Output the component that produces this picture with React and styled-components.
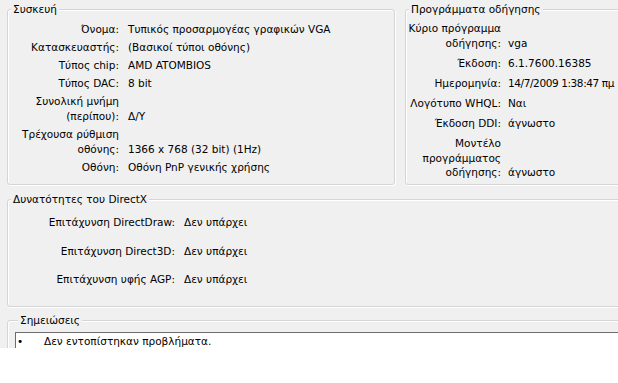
import React from "react";
import styled, { createGlobalStyle } from "styled-components";

const GlobalStyle = createGlobalStyle`
  html, body {
    margin: 0;
    padding: 0;
    background: #ffffff;
    overflow: hidden;
  }
  body {
    font-family: "DejaVu Sans", Tahoma, sans-serif;
    font-size: 10.5px;
    color: #000;
  }
`;

const Dialog = styled.div`
  width: 660px;
  height: 348px;
  overflow: hidden;
  background: #f0f0f0;
  padding: 2px 0 0 7px;
  box-sizing: border-box;
`;

const TopRow = styled.div`
  display: flex;
  gap: 10px;
  margin-bottom: 7px;
`;

const Group = styled.fieldset`
  margin: 0 0 ${p => p.$mb || 0}px 0;
  padding: ${p => p.$pad || "0"};
  height: ${p => p.$h}px;
  width: ${p => p.$w ? `${p.$w}px` : "auto"};
  flex: ${p => p.$w ? "none" : "1"};
  box-sizing: border-box;
  border: 1px solid #d5d5d5;
  border-radius: 3px;
  box-shadow: inset 1px 1px 0 #ffffff, 1px 1px 0 #ffffff;
  min-width: 0;
`;

const Legend = styled.legend`
  padding: 0 2px;
  margin-left: 3px;
  line-height: 14px;
  background: #f0f0f0;
`;

const Grid = styled.div`
  display: grid;
  grid-template-columns: ${p => p.$label}px 1fr;
  column-gap: ${p => p.$colGap}px;
  row-gap: ${p => p.$rowGap}px;
  align-items: end;
  line-height: ${p => p.$line || 15}px;
  white-space: nowrap;
`;

const Label = styled.div`
  text-align: right;
  line-height: ${p => p.$line ? `${p.$line}px` : "inherit"};
`;

const Value = styled.div`
  letter-spacing: ${p => p.$tight ? "-0.4px" : "normal"};
`;

const NotesBox = styled.div`
  background: #ffffff;
  border-top: 1px solid #6d6d6d;
  border-left: 1px solid #6d6d6d;
  height: 60px;
  padding: 1px 0 0 1px;
  display: flex;
  line-height: 14px;
`;

const Bullet = styled.span`
  width: 27px;
  flex: none;
`;

const Multi = ({ lines, line }) => (
  <Label $line={line}>
    {lines.map((l, i) => (
      <div key={i}>{l}</div>
    ))}
  </Label>
);

const device = [
  [["Όνομα:"], "Τυπικός προσαρμογέας γραφικών VGA"],
  [["Κατασκευαστής:"], "(Βασικοί τύποι οθόνης)"],
  [["Τύπος chip:"], "AMD ATOMBIOS"],
  [["Τύπος DAC:"], "8 bit"],
  [["Συνολική μνήμη", "(περίπου):"], "Δ/Υ"],
  [["Τρέχουσα ρύθμιση", "οθόνης:"], "1366 x 768 (32 bit) (1Hz)"],
  [["Οθόνη:"], "Οθόνη PnP γενικής χρήσης"],
];

const drivers = [
  [["Κύριο πρόγραμμα", "οδήγησης:"], "vga"],
  [["Έκδοση:"], "6.1.7600.16385"],
  [["Ημερομηνία:"], "14/7/2009 1:38:47 πμ", null, true],
  [["Λογότυπο WHQL:"], "Ναι"],
  [["Έκδοση DDI:"], "άγνωστο"],
  [["Μοντέλο", "προγράμματος", "οδήγησης:"], "άγνωστο", 14.5],
];

const directx = [
  ["Επιτάχυνση DirectDraw:", "Δεν υπάρχει"],
  ["Επιτάχυνση Direct3D:", "Δεν υπάρχει"],
  ["Επιτάχυνση υφής AGP:", "Δεν υπάρχει"],
];

export default function App() {
  return (
    <>
      <GlobalStyle />
      <Dialog>
        <TopRow>
          <Group $h={183} $w={388} $pad="6px 0 0 0">
            <Legend>Συσκευή</Legend>
            <Grid $label={111} $colGap={9} $rowGap={3}>
              {device.map(([l, v]) => (
                <React.Fragment key={v}>
                  <Multi lines={l} />
                  <Value>{v}</Value>
                </React.Fragment>
              ))}
            </Grid>
          </Group>
          <Group $h={183} $pad="5px 0 0 0">
            <Legend>Προγράμματα οδήγησης</Legend>
            <Grid $label={95} $colGap={7} $rowGap={5}>
              {drivers.map(([l, v, line, tight]) => (
                <React.Fragment key={l.join()}>
                  <Multi lines={l} line={line} />
                  <Value $tight={tight}>{v}</Value>
                </React.Fragment>
              ))}
            </Grid>
          </Group>
        </TopRow>
        <Group $h={115} $mb={6} $pad="9px 0 0 0">
          <Legend>Δυνατότητες του DirectX</Legend>
          <Grid $label={167} $colGap={9} $rowGap={13.5}>
            {directx.map(([l, v]) => (
              <React.Fragment key={l}>
                <Label>{l}</Label>
                <Value>{v}</Value>
              </React.Fragment>
            ))}
          </Grid>
        </Group>
        <Group $h={80} $pad="5px 0 0 7px">
          <Legend>Σημειώσεις</Legend>
          <NotesBox>
            <Bullet>•</Bullet>
            <span>Δεν εντοπίστηκαν προβλήματα.</span>
          </NotesBox>
        </Group>
      </Dialog>
    </>
  );
}
